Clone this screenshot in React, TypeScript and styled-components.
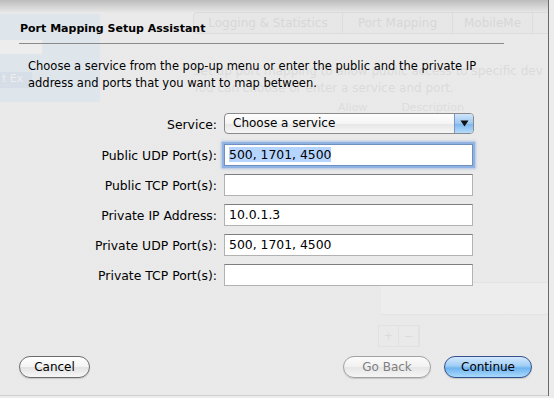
import React from "react";
import styled, { createGlobalStyle } from "styled-components";

const GlobalStyle = createGlobalStyle`
  html, body {
    margin: 0;
    padding: 0;
    width: 554px;
    height: 398px;
    overflow: hidden;
    background: #ececec;
  }
  * { box-sizing: border-box; }
`;

const FONT = `"DejaVu Sans", "Liberation Sans", sans-serif`;

// --- the window behind the sheet ---

const Desktop = styled.div`
  position: relative;
  width: 554px;
  height: 398px;
  font-family: ${FONT};
  background: #ececec;
  overflow: hidden;
`;

const BackWindow = styled.div`
  display: flex;
  height: 396px;
  width: 549px;
  border-right: 1px solid #6a6a6a;
  border-bottom: 1px solid #5a5a5a;
`;

const Sidebar = styled.div`
  width: 100px;
  flex-shrink: 0;
  padding-top: 14px;
`;

const SidebarPanel = styled.div`
  height: 88px;
  background: #b0d6f4;
  padding-top: 26px;
  display: flex;
  flex-direction: column;
  gap: 18px;
`;

const SidebarField = styled.div`
  width: 42px;
  height: 14px;
  background: #ffffff;
`;

const SidebarButton = styled.div`
  width: 32px;
  height: 16px;
  background: #7ea8dc;
  color: #ffffff;
  font-size: 11px;
  padding-left: 2px;
  overflow: hidden;
`;

const BackMain = styled.div`
  flex: 1;
  min-width: 0;
  overflow: hidden;
  display: flex;
  flex-direction: column;
  padding: 12px 0 0 93px;
`;

const Tabs = styled.div`
  display: flex;
  height: 22px;
  border: 1px solid #a4a4a4;
  border-right: none;
  border-radius: 4px 0 0 4px;
  background: #dcdcdc;
`;

const Tab = styled.div<{ $w: number }>`
  width: ${(p) => p.$w}px;
  flex-shrink: 0;
  border-right: 1px solid #a4a4a4;
  font-size: 12px;
  color: #838383;
  display: flex;
  align-items: center;
  justify-content: center;
  white-space: nowrap;
  overflow: hidden;
`;

const BackText = styled.div`
  margin: 29px 0 0 0;
  font-size: 12px;
  color: #969696;
  line-height: 17px;
  white-space: nowrap;
`;

const BackHeaders = styled.div`
  display: flex;
  gap: 34px;
  margin: 4px 0 0 145px;
  font-size: 11px;
  color: #a2a2a2;
`;

const BackTable = styled.div`
  margin: 168px 0 0 188px;
  height: 33px;
  border-top: 1px solid #c4c4c4;
  border-bottom: 1px solid #c4c4c4;
  background: #ffffff;
`;

const BackPlusMinus = styled.div`
  display: flex;
  margin: 10px 0 0 185px;
  width: 42px;
  height: 22px;
  border: 1px solid #c0c0c0;
  color: #a0a0a0;
  font-size: 12px;
  line-height: 20px;
  & > span {
    flex: 1;
    text-align: center;
    border-right: 1px solid #c0c0c0;
  }
`;

// --- the sheet ---

const Sheet = styled.div`
  position: absolute;
  left: 0;
  top: 0;
  width: 548px;
  height: 396px;
  background: linear-gradient(to bottom, rgba(186, 186, 186, 0.95) 0px, rgba(233, 233, 233, 0.82) 13px, rgba(233, 233, 233, 0.82) 100%);
  display: flex;
  flex-direction: column;
  padding: 22px 46px 18px 19px;
  color: #000;
`;

const Title = styled.div`
  font-size: 11px;
  font-weight: bold;
  height: 22px;
  line-height: 14px;
  border-bottom: 1px solid #8a8a8a;
  padding-left: 1px;
  margin-right: -2px;
`;

const Intro = styled.p`
  margin: 14px 0 0 9px;
  font-size: 11.5px;
  line-height: 17px;
`;

const Form = styled.div`
  display: grid;
  grid-template-columns: 198px 250px;
  column-gap: 7px;
  row-gap: 8px;
  margin-top: 21px;
  align-items: center;
`;

const Label = styled.label`
  font-size: 12.4px;
  text-align: right;
`;

const Select = styled.div`
  height: 21px;
  border: 1px solid #8b8b8b;
  border-radius: 4px;
  display: flex;
  align-items: stretch;
  background: linear-gradient(to bottom, #ffffff 0%, #f4f4f4 50%, #e6e6e6 51%, #f6f6f6 100%);
  overflow: hidden;
  margin-bottom: 2px;
`;

const SelectText = styled.span`
  flex: 1;
  font-size: 12px;
  padding-left: 8px;
  line-height: 19px;
`;

const SelectArrow = styled.span`
  width: 19px;
  border-left: 1px solid #7c94c0;
  background: linear-gradient(to bottom, #cfe5fb 0%, #9bc8f2 50%, #7ab5ec 51%, #b6dcfb 100%);
  display: flex;
  align-items: center;
  justify-content: center;
`;

const Field = styled.div<{ $focus?: boolean }>`
  height: 22px;
  background: #fff;
  border: 1px solid #b2b2b2;
  border-top-color: #7e7e7e;
  font-size: 12.4px;
  line-height: 20px;
  padding-left: 4px;
  width: 249px;
  ${(p) =>
    p.$focus &&
    `
    border-color: #6f8fbf;
    box-shadow: 0 0 0 2px #8fb3e2, 0 0 2px 3px rgba(120, 160, 220, 0.5);
  `}
`;

const Selected = styled.span`
  background: #b5d5ff;
`;

const Footer = styled.div`
  margin-top: auto;
  display: flex;
  align-items: center;
`;

const PillButton = styled.button<{ $kind?: "default" | "primary" | "disabled" }>`
  height: 22px;
  width: 71px;
  border-radius: 11px;
  font-family: ${FONT};
  font-size: 12px;
  padding: 0;
  border: 1px solid #6c6c6c;
  color: #000;
  background: linear-gradient(to bottom, #ffffff 0%, #f3f3f3 50%, #e2e2e2 51%, #f7f7f7 100%);
  box-shadow: 0 1px 1px rgba(0, 0, 0, 0.15);
  ${(p) =>
    p.$kind === "primary" &&
    `
    width: 88px;
    margin-left: 13px;
    margin-right: -30px;
    border-color: #34508e;
    background: linear-gradient(to bottom, #d3e8fc 0%, #9fcdf6 45%, #6fb2ef 55%, #a8dafd 100%);
  `}
  ${(p) =>
    p.$kind === "disabled" &&
    `
    width: 88px;
    color: #7f7f7f;
    border-color: #a2a2a2;
    background: linear-gradient(to bottom, #fbfbfb 0%, #f1f1f1 50%, #e6e6e6 51%, #f5f5f5 100%);
  `}
`;

const Spacer = styled.div`
  flex: 1;
`;

const rows: { label: string; value?: string; focus?: boolean }[] = [
  { label: "Public UDP Port(s):", value: "500, 1701, 4500", focus: true },
  { label: "Public TCP Port(s):" },
  { label: "Private IP Address:", value: "10.0.1.3" },
  { label: "Private UDP Port(s):", value: "500, 1701, 4500" },
  { label: "Private TCP Port(s):" },
];

export default function App() {
  return (
    <Desktop>
      <GlobalStyle />
      <BackWindow aria-hidden="true">
        <Sidebar>
          <SidebarPanel>
            <SidebarField />
            <SidebarButton>t Ex</SidebarButton>
          </SidebarPanel>
        </Sidebar>
        <BackMain>
          <Tabs>
            <Tab $w={149}>Logging &amp; Statistics</Tab>
            <Tab $w={110}>Port Mapping</Tab>
            <Tab $w={80}>MobileMe</Tab>
            <Tab $w={40}>IP</Tab>
          </Tabs>
          <BackText>
            Set up port mapping to allow public access to specific dev
            <br />
            You can choose or enter a service and port.
          </BackText>
          <BackHeaders>
            <span>Allow</span>
            <span>Description</span>
          </BackHeaders>
          <BackTable />
          <BackPlusMinus>
            <span>+</span>
            <span>−</span>
          </BackPlusMinus>
        </BackMain>
      </BackWindow>

      <Sheet>
        <Title>Port Mapping Setup Assistant</Title>
        <Intro>
          Choose a service from the pop-up menu or enter the public and the private IP
          <br />
          address and ports that you want to map between.
        </Intro>
        <Form>
          <Label>Service:</Label>
          <Select>
            <SelectText>Choose a service</SelectText>
            <SelectArrow>
              <svg width="9" height="7" viewBox="0 0 9 7">
                <path d="M0.5 0.5 H8.5 L4.5 6.5 Z" fill="#111" />
              </svg>
            </SelectArrow>
          </Select>
          {rows.map((r) => (
            <React.Fragment key={r.label}>
              <Label>{r.label}</Label>
              <Field $focus={r.focus}>
                {r.focus ? <Selected>{r.value}</Selected> : r.value}
              </Field>
            </React.Fragment>
          ))}
        </Form>
        <Footer>
          <PillButton>Cancel</PillButton>
          <Spacer />
          <PillButton $kind="disabled">Go Back</PillButton>
          <PillButton $kind="primary">Continue</PillButton>
        </Footer>
      </Sheet>
    </Desktop>
  );
}
